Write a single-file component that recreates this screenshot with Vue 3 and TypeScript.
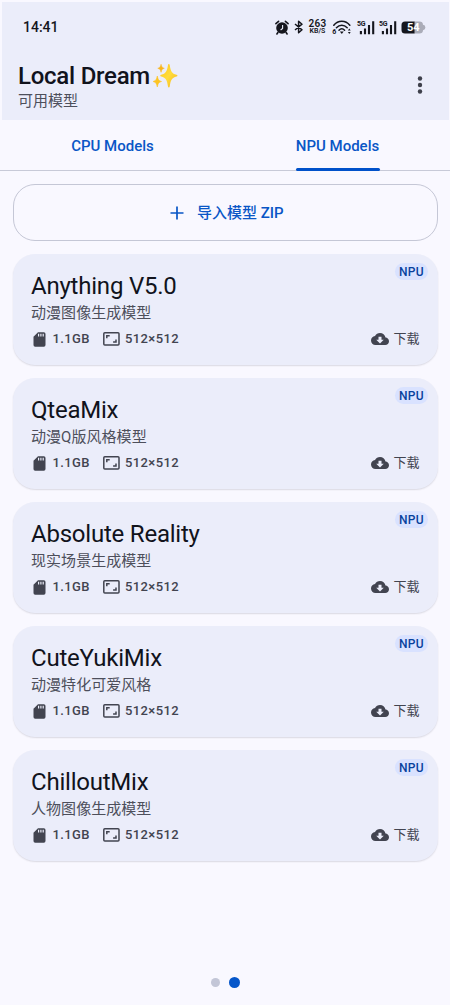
<script setup lang="ts">
interface Model {
  name: string
  description: string
  size: string
  resolution: string
}

const models: Model[] = [
  { name: 'Anything V5.0', description: '动漫图像生成模型', size: '1.1GB', resolution: '512×512' },
  { name: 'QteaMix', description: '动漫Q版风格模型', size: '1.1GB', resolution: '512×512' },
  { name: 'Absolute Reality', description: '现实场景生成模型', size: '1.1GB', resolution: '512×512' },
  { name: 'CuteYukiMix', description: '动漫特化可爱风格', size: '1.1GB', resolution: '512×512' },
  { name: 'ChilloutMix', description: '人物图像生成模型', size: '1.1GB', resolution: '512×512' },
]
</script>

<template>
  <div class="screen">
    <header class="top">
      <div class="status">
        <span class="clock">14:41</span>
        <div class="indicators">
          <svg class="alarm" width="14" height="15" viewBox="0 0 14 15">
            <circle cx="7" cy="8" r="5.8" fill="#15161d" />
            <path d="M.9 3.700 3.600 1.300M13.100 3.700 10.400 1.300M2.900 12.500 1.900 14M11.100 12.500l1 1.500" stroke="#15161d" stroke-width="1.600" stroke-linecap="round" />
            <path d="M7.600 5v3.400L5.600 10" stroke="#ebedfa" stroke-width="1.100" fill="none" />
          </svg>
          <svg class="bluetooth" width="9" height="14" viewBox="0 0 9 14">
            <path d="M1 4 8 9.800 4.600 12.800V1.200L8 4.200 1 10" stroke="#15161d" stroke-width="1.500" fill="none" stroke-linejoin="round" />
          </svg>
          <div class="speed"><b>263</b><span>KB/S</span></div>
          <svg class="wifi" width="20" height="15" viewBox="0 0 20 15">
            <g stroke="#15161d" stroke-width="1.500" fill="none" stroke-linecap="round">
              <path d="M1.800 5.300C6-.1 13.600-.1 17.800 5.300" />
              <path d="M4.400 7.800c3.200-3.500 7.600-3.500 10.800 0" />
              <path d="M7 10.200c1.700-1.800 3.900-1.800 5.600 0" />
            </g>
            <path d="M7.900 11.500h3.800L9.800 14z" fill="#15161d" />
            <path d="M15.900 10.500 17.300 8.600l1.400 1.900zM15.900 12l1.400 1.900 1.400-1.900z" fill="#15161d" />
            <text x=".3" y="13.800" class="tiny">6</text>
          </svg>
          <svg v-for="n in 2" :key="n" class="signal" width="18" height="15" viewBox="0 0 18 15">
            <text x="0" y="6.300" class="tiny">5G</text>
            <path d="M3.900 11v3.200M8 8.500v5.700M12 5v9.200M16.200 1.200v13" stroke="#15161d" stroke-width="2.100" />
          </svg>
          <svg class="battery" width="25" height="13" viewBox="0 0 25 13">
            <path d="M13 .5h5.500a3.500 3.500 0 0 1 3.500 3.300q2.400.3 2.400 2.700T22 9.200a3.500 3.500 0 0 1-3.500 3.300H13z" fill="#aaacb8" />
            <path d="M13.500 .5H4A3.500 3.500 0 0 0 .5 4v5A3.500 3.500 0 0 0 4 12.500h9.500z" fill="#15161d" />
            <text x="6" y="10.300" class="charge">54</text>
          </svg>
        </div>
      </div>
      <div class="app-bar">
        <div>
          <h1>
            <span>Local Dream</span>
            <svg width="26" height="26" viewBox="0 0 27 27" aria-label="sparkles">
              <defs>
                <linearGradient id="gold" x1="0" y1="0" x2="1" y2="1">
                  <stop offset="0" stop-color="#ffc51b" />
                  <stop offset=".5" stop-color="#ffdc3c" />
                  <stop offset="1" stop-color="#f6b418" />
                </linearGradient>
              </defs>
              <path d="M17.500 1q.7 0 .9 1c1 6.700 2.200 8.800 7 10.300q1 .3 1 .9t-1 .9c-4.800 1.500-6 3.600-7 10.300q-.2 1-.9 1t-.9-1c-1-6.700-2.200-8.800-7-10.300q-1-.3-1-.9t1-.9c4.800-1.500 6-3.600 7-10.300q.2-1 .9-1z" fill="url(#gold)" />
              <path d="M9.400 1.300c.7 3 1.200 3.500 3.400 4.200-2.200.7-2.700 1.300-3.400 4.200-.7-2.900-1.200-3.500-3.400-4.200 2.200-.7 2.700-1.200 3.400-4.200z" fill="#f9b51c" stroke="#f9b51c" stroke-width=".5" />
              <path d="M5.500 13.500c.9 4 1.600 4.800 4.400 5.700-2.800.9-3.500 1.700-4.400 5.700-.9-4-1.600-4.800-4.400-5.700 2.800-.9 3.500-1.700 4.400-5.700z" fill="#fdc422" stroke="#fdc422" stroke-width=".6" />
            </svg>
          </h1>
          <p>可用模型</p>
        </div>
        <button class="menu" aria-label="menu">
          <svg width="6" height="20" viewBox="0 0 6 20" fill="#3e404b">
            <circle cx="3" cy="3.500" r="2.200" /><circle cx="3" cy="10" r="2.200" /><circle cx="3" cy="16.500" r="2.200" />
          </svg>
        </button>
      </div>
    </header>

    <nav class="tabs">
      <button>CPU Models</button>
      <button class="active">NPU Models</button>
    </nav>

    <main>
      <button class="import">
        <svg width="14" height="14" viewBox="0 0 14 14"><path d="M7 .5v13M.5 7h13" stroke="#0956c6" stroke-width="1.700" /></svg>
        <span>导入模型 ZIP</span>
      </button>

      <article v-for="model in models" :key="model.name" class="card">
        <h2>{{ model.name }}</h2>
        <p>{{ model.description }}</p>
        <div class="meta">
          <svg class="sd" width="13" height="15" viewBox="0 0 13 15">
            <path d="M5 .3h5.800A1.700 1.700 0 0 1 12.500 2v11a1.700 1.700 0 0 1-1.700 1.700H2.200A1.700 1.700 0 0 1 .5 13V4.800z" fill="#424450" />
            <path d="M5.600 1.800v2.800M7.900 1.800v2.800M10.200 1.800v2.800" stroke="#ebedfa" stroke-width="1.200" />
          </svg>
          <span class="size">{{ model.size }}</span>
          <svg class="frame" width="17" height="14" viewBox="0 0 17 14" fill="none" stroke="#424450" stroke-width="1.500">
            <rect x=".8" y=".8" width="15.200" height="12.200" rx="1" />
            <path d="M3.800 6.300V3.800h2.900M13 7.500V10h-2.900" />
          </svg>
          <span>{{ model.resolution }}</span>
          <div class="download">
            <svg width="18" height="12" viewBox="0 4 24 16" fill="#424450">
              <path d="M19.350 10.040C18.670 6.590 15.640 4 12 4 9.110 4 6.600 5.640 5.350 8.040 2.340 8.360 0 10.910 0 14c0 3.310 2.690 6 6 6h13c2.760 0 5-2.240 5-5 0-2.640-2.050-4.780-4.650-4.960zM17 13l-5 5-5-5h3V9h4v4h3z" />
            </svg>
            <span>下载</span>
          </div>
        </div>
        <span class="badge">NPU</span>
      </article>
    </main>

    <footer>
      <i></i><i class="current"></i>
    </footer>
  </div>
</template>

<style>
body {
  margin: 0;
  background: #f9f8ff;
}
</style>

<style scoped>
* {
  box-sizing: border-box;
}
.screen {
  width: 450px;
  height: 1005px;
  display: flex;
  flex-direction: column;
  padding: 2px 1px 0 2px;
  background: #f9f8ff;
  color: #424450;
  font-family: Roboto, "Noto Sans CJK SC", sans-serif;
  overflow: hidden;
}
h1, h2, p {
  margin: 0;
  font-weight: 400;
}
button {
  border: 0;
  padding: 0;
  background: none;
  font: inherit;
}
svg {
  display: block;
  flex: none;
  overflow: visible;
}
.top {
  flex: none;
  height: 118px;
  background: #ebedfa;
}
.status {
  height: 50px;
  display: flex;
  align-items: center;
  justify-content: space-between;
  padding: 0 23px 0 21px;
}
.clock {
  font-size: 14px;
  font-weight: 500;
  color: #15161d;
}
.indicators {
  display: flex;
  align-items: center;
}
.bluetooth {
  margin-left: 5px;
}
.speed {
  width: 19px;
  margin-left: 5px;
  display: flex;
  flex-direction: column;
  align-items: center;
  color: #15161d;
}
.speed b {
  font-size: 10px;
  line-height: 8px;
  font-weight: 600;
  letter-spacing: 0.3px;
}
.speed span {
  font-size: 7px;
  line-height: 7px;
  font-weight: 600;
}
.wifi {
  margin-left: 5px;
}
.signal {
  margin-left: 5px;
}
.signal + .signal {
  margin-left: 4px;
}
.battery {
  margin-left: 4px;
}
.tiny {
  font: 700 7px Roboto, sans-serif;
  letter-spacing: -0.3px;
  fill: #15161d;
}
.charge {
  font: 700 11px Roboto, sans-serif;
  fill: #fff;
}
.app-bar {
  display: flex;
  align-items: flex-start;
  justify-content: space-between;
  padding: 11px 26px 0 16px;
}
h1 {
  display: flex;
  gap: 1.5px;
  height: 27px;
  line-height: 27px;
  font-size: 24px;
  font-weight: 500;
  letter-spacing: -0.25px;
  color: #11131c;
}
.menu {
  margin-top: 12px;
}
.app-bar p {
  font-size: 15px;
  line-height: 22px;
  color: #4d4f5b;
}
.tabs {
  flex: none;
  height: 51px;
  margin: 0 -1px 0 -2px;
  display: flex;
  border-bottom: 1px solid #c8cad8;
}
.tabs button {
  flex: 1;
  display: flex;
  align-items: center;
  justify-content: center;
  position: relative;
  padding-top: 1px;
  font-size: 15px;
  font-weight: 500;
  color: #0956c6;
}
.active::after {
  content: "";
  position: absolute;
  bottom: -1px;
  width: 84px;
  height: 3px;
  border-radius: 3px;
  background: #0051ca;
}
main {
  display: flex;
  flex-direction: column;
  gap: 13px;
  padding: 13px 11px 0;
}
.import {
  height: 57px;
  display: flex;
  align-items: center;
  justify-content: center;
  gap: 12.5px;
  padding-left: 3px;
  border: 1px solid #c5c7d6;
  border-radius: 22px;
  color: #0956c6;
  font-size: 15px;
  line-height: 20px;
  font-weight: 500;
}
.import span {
  padding-top: 1px;
}
.card {
  position: relative;
  height: 111px;
  padding: 17px 18px 0;
  border-radius: 22px;
  background: #ebedfa;
  box-shadow: 0 1px 1.5px rgba(40, 40, 60, 0.14);
}
h2 {
  font-size: 24px;
  line-height: 30px;
  letter-spacing: -0.22px;
  color: #11131c;
}
.card p {
  font-size: 15px;
  line-height: 24px;
  letter-spacing: 0.05px;
  color: #4d4f5b;
}
.meta {
  display: flex;
  align-items: center;
  height: 28px;
  font-size: 13px;
  line-height: 18px;
  font-weight: 500;
  letter-spacing: 0.4px;
}
.sd {
  margin: 0 6.5px 0 2px;
}
.size {
  margin-right: 13.5px;
}
.frame {
  margin-right: 4.5px;
}
.download {
  display: flex;
  align-items: center;
  gap: 4.5px;
  margin-left: auto;
  margin-right: 0.5px;
  font-weight: 400;
  letter-spacing: 0;
}
.badge {
  position: absolute;
  top: 9px;
  right: 10px;
  width: 33px;
  height: 17px;
  border-radius: 9px;
  background: #d9e2ff;
  color: #08429d;
  text-align: center;
  font-size: 12px;
  line-height: 18px;
  font-weight: 500;
  letter-spacing: 0.4px;
}
footer {
  margin-top: auto;
  height: 46px;
  display: flex;
  align-items: center;
  justify-content: center;
  gap: 8.5px;
}
footer i {
  width: 9px;
  height: 9px;
  border-radius: 50%;
  background: #c3c6d7;
}
footer .current {
  width: 11px;
  height: 11px;
  background: #0556ca;
}
</style>
